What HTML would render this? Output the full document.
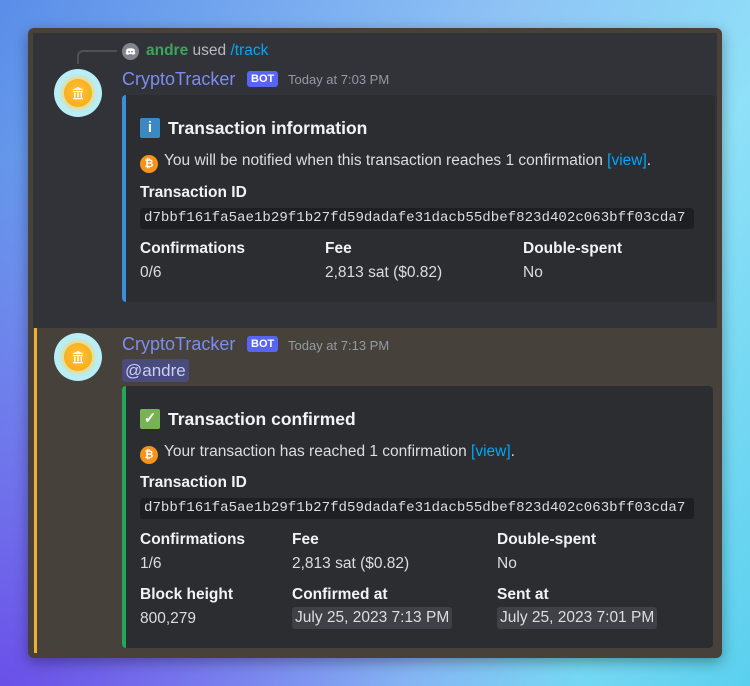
<!DOCTYPE html>
<html><head><meta charset="utf-8"><style>
*{margin:0;padding:0;box-sizing:border-box}
body{width:750px;height:686px;overflow:hidden;font-family:"Liberation Sans",sans-serif;background:linear-gradient(120deg,#5a8de8 0%,#8fc3f5 45%,#8fe0f8 70%,#5ad0ee 100%);position:relative}
.bgl{position:absolute;left:0;top:0;width:750px;height:686px;background:radial-gradient(ellipse at 0% 100%,#6a4fe8 0%,rgba(106,79,232,0) 55%)}
.win{position:absolute;left:28px;top:28px;width:694px;height:630px;background:#47413a;border-radius:6px;box-shadow:0 4px 14px rgba(0,0,0,.35)}
.in{position:absolute;left:5px;top:5px;width:684px;height:295px;background:#313338}
.hl{position:absolute;left:6px;top:300px;width:683px;height:325px;background:#46413a;border-left:3px solid #f0b132}
.a{position:absolute;white-space:nowrap}
.av{width:48px;height:48px;border-radius:50%;background:#b8eef8}
.coin{position:absolute;left:10px;top:10px;width:28px;height:28px;border-radius:50%;background:radial-gradient(circle at 50% 45%,#ffc23a,#f5a70e);box-shadow:0 0 4px 2px #ffd36a}
.name{color:#7d8cf0;font-size:18px;font-weight:500}
.bot{background:#5865f2;color:#fff;font-size:11px;font-weight:bold;border-radius:3px;padding:2px 4px;line-height:12px}
.ts{color:#949ba4;font-size:13px}
.emb{background:#2b2d31;border-radius:4px}
.t{color:#f2f3f5;font-size:17.5px;font-weight:bold}
.d{color:#dbdee1;font-size:15.5px}
.lab{color:#f2f3f5;font-size:15.5px;font-weight:bold}
.code{background:#1e1f22;border-radius:3px;color:#dbdee1;font-family:"Liberation Mono",monospace;font-size:14.1px;padding:2px 4px;line-height:17px}
.btc{display:inline-block;width:18px;height:18px;border-radius:50%;background:#f7931a;color:#fff;font-size:11px;font-weight:bold;text-align:center;line-height:18px;margin-right:6px}
.lnk{color:#00a8fc}
.chip{background:#3f4147;border-radius:3px;padding:2px 3px}
</style></head><body><div class="bgl"></div>
<div class="win">
<div class="in"></div>
<div class="hl"></div>
</div>
<div class="a" style="left:77px;top:50px;width:40px;height:14px;border-left:2px solid #4e5058;border-top:2px solid #4e5058;border-top-left-radius:6px"></div>
<div class="a" style="left:122px;top:43px;width:17px;height:17px;border-radius:50%;background:#80848e"><svg width="17" height="17" viewBox="0 0 17 17"><path d="M4.5 6.2c1.2-.8 2.4-1 4-1s2.8.2 4 1l.8 4.6c-.8.7-1.8 1-2.6 1.1l-.5-.8h-3.4l-.5.8c-.8-.1-1.8-.4-2.6-1.1z" fill="#fff"/><circle cx="7" cy="8.8" r=".9" fill="#80848e"/><circle cx="10" cy="8.8" r=".9" fill="#80848e"/></svg></div>
<div class="a" style="left:146px;top:42px;font-size:15.5px;color:#b5bac1"><span style="color:#3ba55c;font-weight:bold">andre</span> used <span style="color:#00a8fc">/track</span></div>
<div class="a av" style="left:54px;top:69px"><div class="coin"><svg width="28" height="28" viewBox="0 0 28 28"><path d="M8 11l6-3 6 3zM9 12h10v1H9zM10 13.5h1.5v5H10zM13.3 13.5h1.5v5h-1.5zM16.5 13.5H18v5h-1.5zM9 19h10v1.3H9z" fill="#fff"/></svg></div></div>
<div class="a name" style="left:122px;top:69px">CryptoTracker</div>
<div class="a bot" style="left:247px;top:71px">BOT</div>
<div class="a ts" style="left:288px;top:72px">Today at 7:03 PM</div>
<div class="a emb" style="left:122px;top:95px;width:593px;height:207px;border-left:4px solid #3b8fd6"></div>
<div class="a" style="left:140px;top:118px;width:20px;height:20px;background:#3b88c3;border-radius:2px;color:#fff;text-align:center;font-weight:bold;font-size:15px;line-height:20px">i</div>
<div class="a t" style="left:168px;top:118px">Transaction information</div>
<div class="a d" style="left:140px;top:152px"><span class="btc">₿</span><span style="vertical-align:2px">You will be notified when this transaction reaches 1 confirmation <span class="lnk">[view]</span>.</span></div>
<div class="a lab" style="left:140px;top:184px">Transaction ID</div>
<div class="a code" style="left:140px;top:208px;width:554px">d7bbf161fa5ae1b29f1b27fd59dadafe31dacb55dbef823d402c063bff03cda7</div>
<div class="a lab" style="left:140px;top:240px">Confirmations</div>
<div class="a d" style="left:140px;top:264px">0/6</div>
<div class="a lab" style="left:325px;top:240px">Fee</div>
<div class="a d" style="left:325px;top:264px">2,813 sat ($0.82)</div>
<div class="a lab" style="left:523px;top:240px">Double-spent</div>
<div class="a d" style="left:523px;top:264px">No</div>
<div class="a av" style="left:54px;top:333px"><div class="coin"><svg width="28" height="28" viewBox="0 0 28 28"><path d="M8 11l6-3 6 3zM9 12h10v1H9zM10 13.5h1.5v5H10zM13.3 13.5h1.5v5h-1.5zM16.5 13.5H18v5h-1.5zM9 19h10v1.3H9z" fill="#fff"/></svg></div></div>
<div class="a name" style="left:122px;top:334px">CryptoTracker</div>
<div class="a bot" style="left:247px;top:336px">BOT</div>
<div class="a ts" style="left:288px;top:338px">Today at 7:13 PM</div>
<div class="a" style="left:122px;top:359px;height:23px;padding:0 3px;background:#494b7a;border-radius:3px;color:#c9cdfb;font-size:17px;line-height:23px;font-weight:500">@andre</div>
<div class="a emb" style="left:122px;top:386px;width:591px;height:262px;border-left:4px solid #23a55a"></div>
<div class="a" style="left:140px;top:409px;width:20px;height:20px;background:#77b255;border-radius:2px;color:#fff;text-align:center;font-weight:bold;font-size:15px;line-height:20px">✓</div>
<div class="a t" style="left:168px;top:409px">Transaction confirmed</div>
<div class="a d" style="left:140px;top:443px"><span class="btc">₿</span><span style="vertical-align:2px">Your transaction has reached 1 confirmation <span class="lnk">[view]</span>.</span></div>
<div class="a lab" style="left:140px;top:474px">Transaction ID</div>
<div class="a code" style="left:140px;top:498px;width:554px">d7bbf161fa5ae1b29f1b27fd59dadafe31dacb55dbef823d402c063bff03cda7</div>
<div class="a lab" style="left:140px;top:531px">Confirmations</div>
<div class="a d" style="left:140px;top:555px">1/6</div>
<div class="a lab" style="left:292px;top:531px">Fee</div>
<div class="a d" style="left:292px;top:555px">2,813 sat ($0.82)</div>
<div class="a lab" style="left:497px;top:531px">Double-spent</div>
<div class="a d" style="left:497px;top:555px">No</div>
<div class="a lab" style="left:140px;top:586px">Block height</div>
<div class="a d" style="left:140px;top:610px">800,279</div>
<div class="a lab" style="left:292px;top:586px">Confirmed at</div>
<div class="a d chip" style="left:292px;top:607px">July 25, 2023 7:13 PM</div>
<div class="a lab" style="left:497px;top:586px">Sent at</div>
<div class="a d chip" style="left:497px;top:607px">July 25, 2023 7:01 PM</div>
</body></html>
